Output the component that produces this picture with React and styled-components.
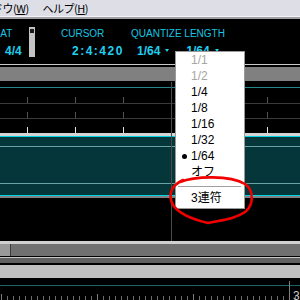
import React from 'react';
import styled, { createGlobalStyle } from 'styled-components';

const Global = createGlobalStyle`
  html, body { margin: 0; padding: 0; background: #000; overflow: hidden; }
  #root { width: 300px; height: 300px; overflow: hidden; }
`;

const Screen = styled.div`
  position: relative;
  width: 300px;
  height: 300px;
  overflow: hidden;
  background: #000;
  display: flex;
  flex-direction: column;
  font-family: "Liberation Sans", "Noto Sans CJK JP", sans-serif;
`;

const Line = styled.div`
  flex: none;
  height: ${(p) => p.$h}px;
  background: ${(p) => p.$c};
`;

const MenuBar = styled.div`
  flex: none;
  height: 16px;
  background: #dedfe6;
  display: flex;
  align-items: center;
  gap: 14px;
  font-family: "Noto Sans CJK JP", "Liberation Sans", sans-serif;
  font-size: 11px;
  letter-spacing: -0.5px;
  color: #000;
  white-space: nowrap;
`;

const MenuItem = styled.span`
  margin-left: ${(p) => p.$offset || 0}px;
  line-height: 16px;
  u { text-decoration: underline; text-underline-offset: 1px; }
`;

const Header = styled.div`
  flex: none;
  height: 45px;
  box-sizing: border-box;
  padding-top: 9px;
  display: flex;
  align-items: flex-start;
  white-space: nowrap;
  color: #1ccbe8;
`;

const Column = styled.div`
  flex: none;
  width: ${(p) => p.$w}px;
  margin-left: ${(p) => p.$ml}px;
  display: flex;
  flex-direction: column;
`;

const Label = styled.div`
  font-size: 10px;
  line-height: 12px;
  color: #18c6e2;
`;

const Value = styled.div`
  margin-top: 4px;
  padding-left: ${(p) => p.$pl}px;
  font-size: 12px;
  font-weight: bold;
  line-height: 14px;
  letter-spacing: ${(p) => p.$ls || 0}px;
  color: #20cff0;
  display: flex;
  align-items: flex-start;
`;

const Drop = styled.span`
  display: flex;
  align-items: flex-start;
  margin-left: ${(p) => p.$ml || 0}px;
`;

const Caret = styled.span`
  width: 0;
  height: 0;
  margin-top: 5px;
  margin-left: 5px;
  border-left: 2.5px solid transparent;
  border-right: 2.5px solid transparent;
  border-top: 3px solid #20cff0;
`;

const Slider = styled.div`
  flex: none;
  margin-left: 8px;
  margin-top: -1px;
  width: 6px;
  height: 30px;
  background: #c4c4c4;
  display: flex;
  justify-content: center;
`;

const Knob = styled.div`
  width: 4px;
  height: 4px;
  margin-top: 2px;
  background: #1a1a1a;
`;

const GridRow = styled.div`
  flex: none;
  height: ${(p) => (p.$last ? 14 : 14)}px;
  border-bottom: ${(p) => (p.$last ? 'none' : '1px solid #3a3a3a')};
  background-image: repeating-linear-gradient(
    to right,
    transparent 0 27px,
    ${(p) => (p.$last ? '#e4e4e4' : '#505050')} 27px 28px,
    transparent 28px 48px
  );
  background-size: 100% 6px;
  background-position: 0 100%;
  background-repeat: no-repeat;
`;

const TealTrack = styled.div`
  flex: none;
  height: 58px;
  background: #04363a;
  display: flex;
  flex-direction: column;
  gap: 36px;
  padding-top: 9px;
  box-sizing: border-box;
`;

const TrackLine = styled.div`
  height: 1px;
  background: #68a4a6;
`;

const Spacer = styled.div`
  flex: none;
  height: ${(p) => p.$h}px;
`;

const Scrollbar = styled.div`
  flex: none;
  height: 12px;
  background: #707070;
  display: flex;
`;

const Thumb = styled.div`
  width: 10px;
  background: #9a9a9a;
  border-right: 1px solid #3c3c3c;
`;

const TimeRuler = styled.div`
  position: relative;
  flex: none;
  height: 22px;
  display: flex;
  flex-direction: column;
`;

const Ticks = styled.div`
  flex: 1;
  background-image:
    repeating-linear-gradient(to right, #7c7c7c 0 1px, transparent 1px 96px),
    repeating-linear-gradient(to right, #6c6c6c 0 1px, transparent 1px 6px);
  background-size: 100% 6px, 100% 4px;
  background-position: 1px 100%, 1px 100%;
  background-repeat: no-repeat;
`;

const Marker = styled.div`
  position: absolute;
  left: 289px;
  top: 3px;
  width: 1px;
  height: 19px;
  background: #808080;
`;

const MarkerLabel = styled.span`
  position: absolute;
  left: 4px;
  top: 9px;
  font-size: 12px;
  line-height: 12px;
  color: #c8c8c8;
`;

const CursorLine = styled.div`
  position: absolute;
  left: 171px;
  top: 82px;
  width: 1px;
  height: 159px;
  background: #4a4a4a;
`;

const Popup = styled.div`
  position: absolute;
  left: 175px;
  top: 51px;
  width: 70px;
  box-sizing: border-box;
  border: 1px solid #9a9a9a;
  background: #fff;
  padding-bottom: 2px;
  font-family: "Liberation Sans", "Noto Sans CJK JP", sans-serif;
  font-size: 12px;
`;

const PopItem = styled.div`
  height: 16px;
  line-height: 16px;
  display: flex;
  align-items: center;
  color: ${(p) => (p.$disabled ? '#a6a6a0' : '#000')};
  white-space: nowrap;
`;

const Check = styled.span`
  flex: none;
  width: 15px;
  display: flex;
  align-items: center;
`;

const Bullet = styled.span`
  width: 5px;
  height: 5px;
  margin-left: 6px;
  border-radius: 50%;
  background: #000;
`;

const Separator = styled.div`
  height: 1px;
  margin: 6px 3px 3px 2px;
  background: #a0a0a0;
`;

const Annotation = styled.svg`
  position: absolute;
  left: 0;
  top: 0;
  width: 300px;
  height: 300px;
  pointer-events: none;
`;

const items = [
  { t: '1/1', d: true },
  { t: '1/2', d: true },
  { t: '1/4' },
  { t: '1/8' },
  { t: '1/16' },
  { t: '1/32' },
  { t: '1/64', on: true },
  { t: 'オフ' },
];

export default function App() {
  return (
    <>
      <Global />
      <Screen>
        <MenuBar>
          <MenuItem $offset={-8}>ドウ(<u>W</u>)</MenuItem>
          <MenuItem>ヘルプ(<u>H</u>)</MenuItem>
        </MenuBar>
        <Line $h={1} $c="#f4f4f4" />
        <Line $h={2} $c="#a0a0a4" />
        <Header>
          <Column $w={34} $ml={-13}>
            <Label>BEAT</Label>
            <Value $pl={18}>4/4</Value>
          </Column>
          <Slider>
            <Knob />
          </Slider>
          <Column $w={64} $ml={26}>
            <Label>CURSOR</Label>
            <Value $pl={11} $ls={1.5}>2:4:420</Value>
          </Column>
          <Column $w={160} $ml={6}>
            <Label>QUANTIZE LENGTH</Label>
            <Value $pl={6}>
              <Drop>1/64<Caret /></Drop>
              <Drop $ml={17}>1/64<Caret /></Drop>
            </Value>
          </Column>
        </Header>
        <Line $h={1} $c="#c8c8c8" />
        <Line $h={2} $c="#000" />
        <Line $h={14} $c="#808080" />
        <Line $h={6} $c="#000" />
        <Line $h={1} $c="#23868c" />
        <Line $h={1} $c="#000" />
        <GridRow />
        <GridRow />
        <GridRow $last />
        <Line $h={3} $c="#d4d4d4" />
        <Line $h={1} $c="#00d4e4" />
        <TealTrack>
          <TrackLine />
          <TrackLine />
        </TealTrack>
        <Line $h={1} $c="#00d4e4" />
        <Line $h={2} $c="#808080" />
        <Spacer $h={43} />
        <Line $h={3} $c="#d0d0d0" />
        <Scrollbar>
          <Thumb />
        </Scrollbar>
        <Line $h={1} $c="#000" />
        <Line $h={1} $c="#c8c8c8" />
        <Line $h={5} $c="#606060" />
        <Line $h={2} $c="#000" />
        <Line $h={13} $c="#c0c0c0" />
        <TimeRuler>
          <Spacer $h={7} />
          <Line $h={1} $c="#1a6468" />
          <Ticks />
          <Marker>
            <MarkerLabel>3</MarkerLabel>
          </Marker>
        </TimeRuler>

        <CursorLine />

        <Popup>
          {items.map((it) => (
            <PopItem key={it.t} $disabled={it.d}>
              <Check>{it.on && <Bullet />}</Check>
              {it.t}
            </PopItem>
          ))}
          <Separator />
          <PopItem>
            <Check />
            3連符
          </PopItem>
        </Popup>

        <Annotation viewBox="0 0 300 300">
          <path
            d="M180 182 C195 176 230 175 245 184 C254 190 254 205 245 212 C235 219 222 220 208 223 C195 220 180 215 173 205 C168 196 170 186 183 180"
            fill="none"
            stroke="#f20000"
            strokeWidth="2.6"
            strokeLinecap="round"
          />
        </Annotation>
      </Screen>
    </>
  );
}
